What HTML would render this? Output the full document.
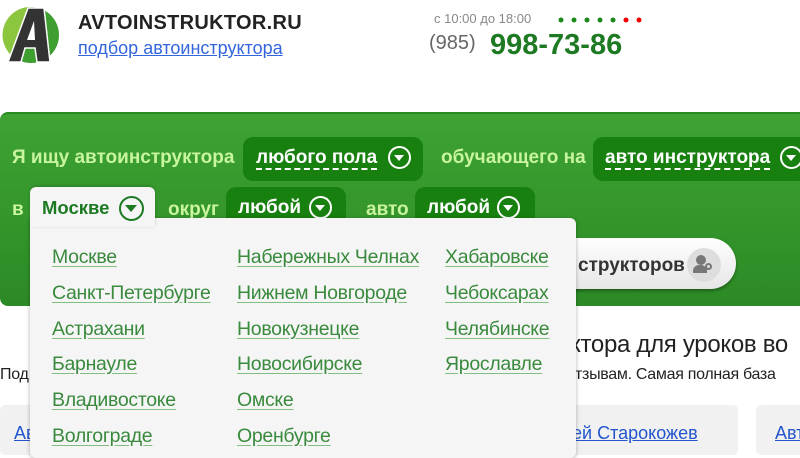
<!DOCTYPE html>
<html><head><meta charset="utf-8"><style>
*{margin:0;padding:0;box-sizing:border-box}
body{width:800px;height:450px;overflow:hidden;background:#fff;font-family:"Liberation Sans",Arial,sans-serif;position:relative}
.a{position:absolute;white-space:nowrap}
.panel{position:absolute;left:0;top:112px;width:820px;height:194px;background:linear-gradient(#3da332,#2c8a25);border-radius:8px 0 0 8px;border-top:2px solid #2a8a22}
.lbl{color:#c9f5a0;font-size:19px;font-weight:bold}
.pill{position:absolute;background:#17800f;border-radius:10px;height:44px}
.pv{color:#fff;font-size:19px;font-weight:bold;border-bottom:2px dashed #fff;line-height:21px}
.ci{position:absolute;width:23px;height:23px;border:2px solid #fff;border-radius:50%}
.ci:after{content:"";position:absolute;left:4px;top:7px;border-left:5.5px solid transparent;border-right:5.5px solid transparent;border-top:6px solid #fff}
.drop{position:absolute;left:30px;top:218px;width:546px;height:240px;background:#f5f5f5;border-radius:6px;box-shadow:0 1px 4px rgba(0,0,0,.3)}
.tab{position:absolute;left:30px;top:187px;width:125px;height:40px;background:#f5f5f5;border-radius:6px 6px 0 0;box-shadow:0 -1px 3px rgba(0,0,0,.2)}
.c{position:absolute;color:#3a8a3e;font-size:19.5px;text-decoration:underline;text-decoration-color:#7fbf80;text-underline-offset:3px;letter-spacing:-.3px}
.card{position:absolute;top:405px;height:50px;background:#f1f1f1;border-radius:5px}
.bl{color:#2255cc;text-decoration:underline;font-size:18px}
</style></head><body>
<svg class="a" style="left:2px;top:4px" width="58" height="62" viewBox="0 0 58 62">
<circle cx="29" cy="31" r="28" fill="#3e9e30"/>
<path d="M29 3 A28 28 0 0 0 10 52 Z" fill="#8cc63f"/>
<path d="M6 58 L26 4 L42 4 L48 58 L35 58 L33 44 L23 44 L19 58Z" fill="#333" stroke="#fff" stroke-width="1.5"/>
<path d="M25 36 L33 36 L32 17Z" fill="#fff"/>
</svg>
<div class="a" style="left:78px;top:12px;font-size:20px;font-weight:bold;color:#222;letter-spacing:.3px">AVTOINSTRUKTOR.RU</div>
<div class="a" style="left:78px;top:38px;font-size:18px;color:#3366dd;text-decoration:underline">подбор автоинструктора</div>
<div class="a" style="left:434px;top:11px;font-size:13px;color:#888">с 10:00 до 18:00</div>
<svg class="a" style="left:555px;top:15px" width="90" height="10"><g fill="#1a8a1a"><circle cx="6" cy="5" r="2.5"/><circle cx="19" cy="5" r="2.5"/><circle cx="32" cy="5" r="2.5"/><circle cx="45" cy="5" r="2.5"/><circle cx="58" cy="5" r="2.5"/></g><g fill="#e00"><circle cx="71" cy="5" r="2.5"/><circle cx="84" cy="5" r="2.5"/></g></svg>
<div class="a" style="left:429px;top:32px;font-size:20px;color:#666">(985)</div>
<div class="a" style="left:490px;top:29px;font-size:29px;font-weight:bold;color:#1d7a22">998-73-86</div>

<div class="panel"></div>
<div class="a lbl" style="left:12px;top:147px">Я ищу автоинструктора</div>
<div class="pill" style="left:243px;top:137px;width:180px"></div>
<div class="a pv" style="left:256px;top:147px">любого пола</div>
<div class="ci" style="left:388px;top:146px"></div>
<div class="a lbl" style="left:441px;top:147px">обучающего на</div>
<div class="pill" style="left:593px;top:137px;width:230px"></div>
<div class="a pv" style="left:605px;top:147px">авто инструктора</div>
<div class="ci" style="left:780px;top:146px"></div>

<div class="a lbl" style="left:12px;top:199px">в</div>
<div class="a lbl" style="left:168px;top:199px">округ</div>
<div class="pill" style="left:226px;top:187px;width:120px"></div>
<div class="a pv" style="left:238px;top:197px">любой</div>
<div class="ci" style="left:309px;top:196px"></div>
<div class="a lbl" style="left:366px;top:199px">авто</div>
<div class="pill" style="left:415px;top:187px;width:120px"></div>
<div class="a pv" style="left:427px;top:197px">любой</div>
<div class="ci" style="left:497px;top:196px"></div>

<div class="a" style="left:520px;top:238px;width:216px;height:51px;border-radius:26px;background:linear-gradient(#fff,#e6e6e6);box-shadow:0 2px 3px rgba(0,0,0,.35)"></div>
<div class="a" style="left:578px;top:255px;font-size:19px;font-weight:bold;color:#333">структоров</div>
<div class="a" style="left:687px;top:248px;width:34px;height:34px;border-radius:50%;background:#ddd"></div>
<div class="a" style="left:696px;top:255px;width:10px;height:10px;border-radius:50%;background:#777"></div>
<div class="a" style="left:693px;top:265px;width:14px;height:8px;border-radius:6px 6px 0 0;background:#777"></div>
<div class="a" style="left:705px;top:263px;width:7px;height:7px;border-radius:50%;border:2px solid #777"></div>

<div class="a" style="left:570px;top:331px;font-size:24px;color:#222;letter-spacing:-.3px">ктора для уроков во</div>
<div class="a" style="left:0;top:366px;font-size:16px;color:#222;letter-spacing:-.3px">Под</div>
<div class="a" style="left:575px;top:366px;font-size:16px;color:#222;letter-spacing:-.3px">тзывам. Самая полная база</div>
<div class="card" style="left:0;width:738px"></div>
<div class="card" style="left:756px;width:60px"></div>
<div class="a bl" style="left:14px;top:423px">Ав</div>
<div class="a bl" style="left:572px;top:423px">ей Старокожев</div>
<div class="a bl" style="left:775px;top:423px">Авт</div>

<div class="drop"></div>
<div class="tab"></div>
<div class="a" style="left:42px;top:197px;font-size:18.5px;font-weight:bold;color:#1c7a22">Москве</div>
<div class="a" style="left:119px;top:196px;width:25px;height:25px;border:2px solid #1c7a22;border-radius:50%"></div>
<div class="a" style="left:125px;top:205px;border-left:6.5px solid transparent;border-right:6.5px solid transparent;border-top:7px solid #1c7a22"></div>

<div class="c" style="left:52px;top:246px">Москве</div>
<div class="c" style="left:52px;top:282px">Санкт-Петербурге</div>
<div class="c" style="left:52px;top:318px">Астрахани</div>
<div class="c" style="left:52px;top:353px">Барнауле</div>
<div class="c" style="left:52px;top:389px">Владивостоке</div>
<div class="c" style="left:52px;top:425px">Волгограде</div>
<div class="c" style="left:237px;top:246px">Набережных Челнах</div>
<div class="c" style="left:237px;top:282px">Нижнем Новгороде</div>
<div class="c" style="left:237px;top:318px">Новокузнецке</div>
<div class="c" style="left:237px;top:353px">Новосибирске</div>
<div class="c" style="left:237px;top:389px">Омске</div>
<div class="c" style="left:237px;top:425px">Оренбурге</div>
<div class="c" style="left:445px;top:246px">Хабаровске</div>
<div class="c" style="left:445px;top:282px">Чебоксарах</div>
<div class="c" style="left:445px;top:318px">Челябинске</div>
<div class="c" style="left:445px;top:353px">Ярославле</div>
</body></html>
